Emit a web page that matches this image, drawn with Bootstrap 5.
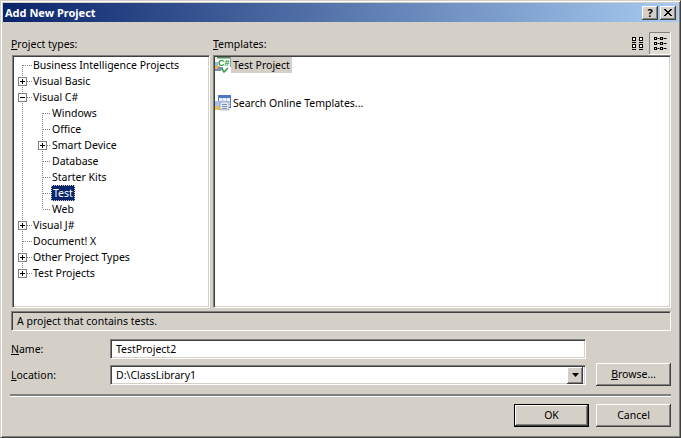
<!DOCTYPE html>
<html lang="en">
<head>
<meta charset="utf-8">
<title>Add New Project</title>
<link href="https://cdn.jsdelivr.net/npm/bootstrap@5.3.0/dist/css/bootstrap.min.css" rel="stylesheet">
<style>
html,body{width:681px;height:438px;margin:0;overflow:hidden;background:#d4d0c8}
body{font-family:"Noto Sans","Liberation Sans",sans-serif;font-size:10.5px;line-height:13px;color:#000}
.dlg{width:681px;height:438px;box-sizing:border-box;border:1px solid;border-color:#d4d0c8 #404040 #404040 #d4d0c8;box-shadow:inset 1px 1px 0 #fff,inset -1px -1px 0 #808080;padding:2px}
.ttl{height:19px;background:linear-gradient(90deg,#0a246a,#a6caf0);color:#fff;font-weight:700;font-size:11px;padding:0 2px}
.capbtn{width:16px;height:14px;background:#d4d0c8;border:0;padding:0;box-shadow:inset -1px -1px 0 #404040,inset 1px 1px 0 #fff,inset -2px -2px 0 #808080;font-weight:700;color:#000;font-size:11px;line-height:13px}
.capq{margin-right:2px}
.wrapin{padding:0 7px 0 8px;flex:1}
.toprow{height:33px}
.lbl u{text-decoration-thickness:1px}
.coll{width:199px}
.tplhead{padding-left:3px}
.sunk{background:#fff;box-sizing:border-box;border:1px solid;border-color:#808080 #fff #fff #808080;box-shadow:inset 1px 1px 0 #404040,inset -1px -1px 0 #d4d0c8}
.pane{height:253px;position:relative}
.treepane{width:198px;margin-left:1px;margin-right:3px;padding:1px 0 0}
.tplpane{padding:1px 0 0 1px}
.lines{position:absolute;left:-1px;top:-1px}
.trow{height:16px;line-height:16px;white-space:nowrap;position:relative}
.lv1{padding-left:20px}
.lv2{padding-left:39px}
.lvsel{padding-left:38px}
.sel{display:inline-block;height:16px;background:#0a246a;color:#fff;outline:1px dotted #d4d0c8;outline-offset:-1px;padding:0 2px}
.tpl{height:16px;line-height:16px;white-space:nowrap}
.tpltxt{padding:0 2px;height:16px}
.tplon{background:#d4d0c8}
.tpl2{margin-top:22px}
.statbar{height:20px;box-sizing:border-box;border:1px solid;border-color:#808080 #fff #fff #808080;box-shadow:inset 1px 1px 0 #404040;padding-left:5px;line-height:19px;margin-top:3px}
.flbl{width:99px}
.loclbl{padding-top:1px}
.fld{height:20px;width:476px;padding-left:5px;line-height:18px;position:relative}
.namerow{margin-top:8px}
.locrow{margin-top:4px;height:23px}
.ddbtn{position:absolute;right:2px;top:1px;width:16px;height:17px;background:#d4d0c8;box-shadow:inset -1px -1px 0 #404040,inset 1px 1px 0 #fff,inset -2px -2px 0 #808080}
.xbtn{width:75px;height:23px;background:#d4d0c8;border:0;padding:0;font-size:10.5px;color:#000;box-shadow:inset -1px -1px 0 #404040,inset 1px 1px 0 #fff,inset -2px -2px 0 #808080}
.xbtn.dflt{outline:1px solid #000;outline-offset:-1px;box-shadow:inset -2px -2px 0 #404040,inset 2px 2px 0 #fff,inset -3px -3px 0 #808080}
.rule{height:2px;background:#808080;box-shadow:0 1px 0 #fff;margin-top:8px;margin-left:-1px}
.btnrow{margin-top:8px;gap:7px}
.viewicon{margin-right:5px}
svg{display:block}
</style>
</head>
<body>
<div class="dlg d-flex flex-column">
  <div class="ttl d-flex align-items-center justify-content-between">
    <span>Add New Project</span>
    <span class="d-flex">
      <button class="capbtn capq">?</button>
      <button class="capbtn"><svg width="16" height="14"><path d="M4 3l7 7M5 3l7 7M11 3l-7 7M12 3l-7 7" stroke="#000" fill="none"/></svg></button>
    </span>
  </div>
  <div class="wrapin d-flex flex-column">
    <div class="toprow d-flex">
      <div class="coll lbl align-self-end pb-1"><u>P</u>roject types:</div>
      <div class="flex-grow-1 d-flex justify-content-between lbl align-items-end tplhead">
        <span class="pb-1"><u>T</u>emplates:</span>
        <span class="d-flex align-items-center">
          <svg class="viewicon" width="12" height="13"><g fill="#fff" stroke="#000"><rect x=".5" y=".5" width="3" height="3"/><rect x="7.5" y=".5" width="3" height="3"/><rect x=".5" y="7.5" width="3" height="3"/><rect x="7.5" y="7.5" width="3" height="3"/></g><path d="M0 5.500h4M7 5.500h4M0 12.500h4M7 12.500h4" stroke="#000"/></svg>
          <svg width="22" height="23"><rect width="22" height="23" fill="#dfdcd6"/><path d="M.5 22V.5H22" stroke="#808080" fill="none"/><path d="M21.500 0v22.500H0" stroke="#fff" fill="none"/><g fill="none" stroke="#000"><rect x="5.500" y="5.500" width="2" height="2"/><rect x="11.500" y="5.500" width="2" height="2"/><rect x="5.500" y="10.500" width="2" height="2"/><rect x="11.500" y="10.500" width="2" height="2"/><rect x="5.500" y="15.500" width="2" height="2"/><rect x="11.500" y="15.500" width="2" height="2"/><path d="M8.500 6.500h2M14.500 6.500h3M8.500 11.500h2M14.500 11.500h3M8.500 16.500h2M14.500 16.500h3"/></g></svg>
        </span>
      </div>
    </div>
    <div class="d-flex">
      <div class="sunk pane treepane">
        <svg class="lines" width="198" height="253">
          <g stroke="#808080" stroke-dasharray="1 1" fill="none">
            <path d="M10.500 10v208M30.500 58v96"/>
            <path d="M11 10.500h9M15 26.500h5M15 42.500h5M31 58.500h8M31 74.500h8M35 90.500h4M31 106.500h8M31 122.500h8M31 138.500h8M31 154.500h8M15 170.500h5M11 186.500h9M15 202.500h5M15 218.500h5"/>
          </g>
          <g fill="#fff" stroke="#808080">
            <rect x="6.500" y="22.500" width="8" height="8"/><rect x="6.500" y="38.500" width="8" height="8"/>
            <rect x="26.500" y="86.500" width="8" height="8"/><rect x="6.500" y="166.500" width="8" height="8"/>
            <rect x="6.500" y="198.500" width="8" height="8"/><rect x="6.500" y="214.500" width="8" height="8"/>
          </g>
          <path stroke="#000" d="M8 26.500h5M10.500 24v5M8 42.500h5M28 90.500h5M30.500 88v5M8 170.500h5M10.500 168v5M8 202.500h5M10.500 200v5M8 218.500h5M10.500 216v5"/>
        </svg>
        <div class="trow lv1">Business Intelligence Projects</div>
        <div class="trow lv1">Visual Basic</div>
        <div class="trow lv1">Visual C#</div>
        <div class="trow lv2">Windows</div>
        <div class="trow lv2">Office</div>
        <div class="trow lv2">Smart Device</div>
        <div class="trow lv2">Database</div>
        <div class="trow lv2">Starter Kits</div>
        <div class="trow lvsel"><span class="sel">Test</span></div>
        <div class="trow lv2">Web</div>
        <div class="trow lv1">Visual J#</div>
        <div class="trow lv1">Document! X</div>
        <div class="trow lv1">Other Project Types</div>
        <div class="trow lv1">Test Projects</div>
      </div>
      <div class="flex-grow-1 sunk pane tplpane">
        <div class="tpl d-flex">
          <svg width="16" height="16"><rect x="2" y="0" width="14" height="10" fill="#fff"/><rect x="2" y="0" width="14" height="1.500" fill="#4f8f4f"/><rect x="15" y="0" width="1" height="10" fill="#8aa88a"/><text x="3" y="9" font-family="Liberation Sans" font-weight="700" font-size="9" fill="#12962a">C#</text><rect x="0" y="5" width="3" height="4" fill="#9db8e0"/><rect x="0" y="9" width="5" height="3" fill="#e6b84a"/><rect x="0" y="12" width="6" height="2" fill="#8a8f9c"/><rect x="3" y="10" width="5" height="3" fill="#6f8fc8"/><path d="M7 12l2 3 4-4" stroke="#2f9e3f" stroke-width="1.500" fill="none"/></svg>
          <span class="tpltxt tplon">Test Project</span>
        </div>
        <div class="tpl tpl2 d-flex">
          <svg width="16" height="16"><rect x="3.500" y=".5" width="12" height="12" fill="#eef3fb" stroke="#5a7ab8"/><rect x="3" y="0" width="13" height="3" fill="#4c78c8"/><path d="M4 6.500h11M4 9.500h11M7.500 3v9M11.500 3v9" stroke="#b4c8e8"/><rect x="0" y="6" width="5" height="5" fill="#a8c0e8"/><rect x="0" y="11" width="6" height="4" fill="#e6c15a"/><rect x="5" y="7" width="9" height="8" fill="#e4e8f0" stroke="#6a7fa8" stroke-width=".5"/><path d="M7 9.500h5M7 11.500h5M7 13.500h5" stroke="#7a8fb0"/></svg>
          <span class="tpltxt">Search Online Templates...</span>
        </div>
      </div>
    </div>
    <div class="statbar">A project that contains tests.</div>
    <div class="namerow d-flex align-items-center">
      <div class="flbl"><u>N</u>ame:</div>
      <div class="fld sunk">TestProject2</div>
    </div>
    <div class="locrow d-flex align-items-center">
      <div class="flbl loclbl"><u>L</u>ocation:</div>
      <div class="fld sunk">D:\ClassLibrary1
        <div class="ddbtn d-flex align-items-center justify-content-center"><svg width="7" height="4"><path d="M0 0h7L3.500 4z" fill="#000"/></svg></div>
      </div>
      <button class="xbtn ms-auto"><u>B</u>rowse...</button>
    </div>
    <div class="rule"></div>
    <div class="btnrow d-flex justify-content-end">
      <button class="xbtn dflt">OK</button>
      <button class="xbtn">Cancel</button>
    </div>
  </div>
</div>
</body>
</html>
